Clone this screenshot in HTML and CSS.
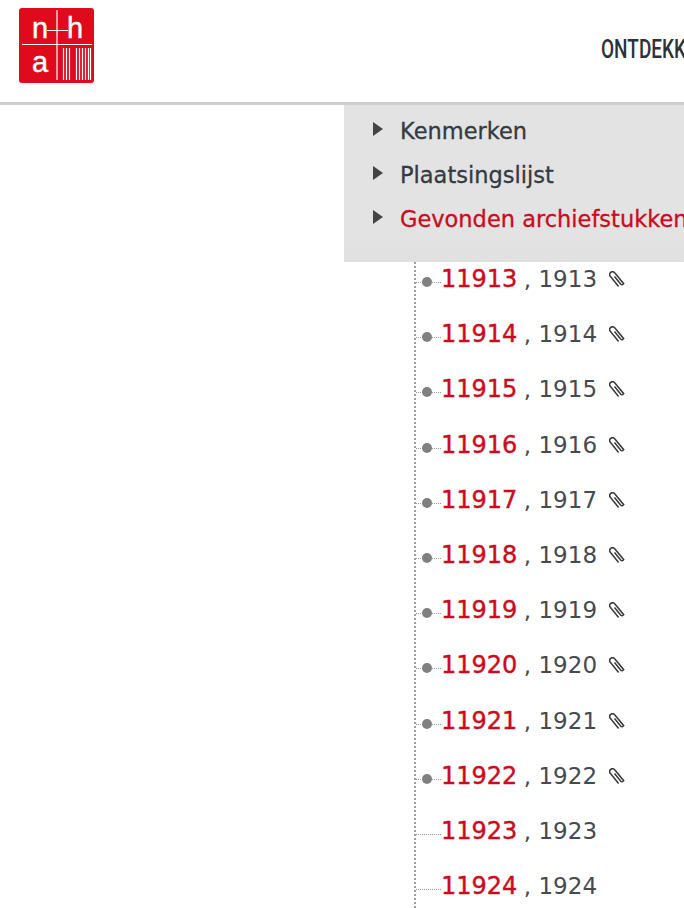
FILE: index.html
```html
<!DOCTYPE html>
<html lang="nl">
<head>
    <meta charset="UTF-8">
    <title>Noord-Hollands Archief</title>
    <link rel="stylesheet" href="styles.css">
</head>
<body>
    <header class="site-header">
        <a class="logo" href="#">
            <svg width="75" height="75" viewBox="0 0 75 75">
                <rect width="75" height="75" rx="3" fill="#df0a1c"/>
                <g stroke="#fff" fill="none">
                    <path d="M3 36.500H73" stroke-width="1.200"/>
                    <path d="M38 2V72" stroke-width="1.200"/>
                    <path d="M28 22.500H49" stroke-width="1"/>
                    <path d="M44.500 40V72M47.500 40V72M50.500 40V72M57.500 40V72M60.500 40V72M63.500 40V72M66.500 40V72M69.500 40V72M71.500 40V72" stroke-width="1.200"/>
                </g>
                <text x="13" y="30" class="logo-letter">n</text>
                <text x="48" y="30" class="logo-letter">h</text>
                <text x="13" y="64" class="logo-letter">a</text>
            </svg>
        </a>
        <nav class="main-nav"><a class="nav-link" href="#">ONTDEKKEN</a></nav>
    </header>

    <main class="content">
        <ul class="accordion">
            <li class="accordion-item">Kenmerken</li>
            <li class="accordion-item">Plaatsingslijst</li>
            <li class="accordion-item active">Gevonden archiefstukken</li>
        </ul>

        <ul class="tree" id="tree"></ul>
    </main>

    <svg class="icon-defs" width="0" height="0">
        <symbol id="clip" viewBox="0 0 16 18">
            <path d="M5.500 5.500 11.800 13.200A1.900 1.900 0 0 0 14.700 12.700L5.700 1.700A2.800 2.800 0 0 0 1.300 5.300L9.600 15.500" fill="none" stroke="#3a3a3a" stroke-width="1.500"/>
        </symbol>
    </svg>

    <script>
    // inventarisnummers 11913 t/m 11924, alleen de eerste tien hebben scans
    const tree = document.getElementById('tree');
    let rows = '';
    for (let i = 0; i < 12; i++) {
        const hasScan = i < 10;
        rows += `
            <li class="tree-row">
                <span class="connector">${hasScan ? '<span class="dot"></span>' : ''}</span>
                <a class="inv-number" href="#">${11913 + i}</a>
                <span class="inv-year">, ${1913 + i}</span>
                ${hasScan ? '<svg class="clip" width="16" height="18"><use href="#clip"></use></svg>' : ''}
            </li>`;
    }
    tree.innerHTML = rows;
    </script>
</body>
</html>
```

FILE: styles.css
```css
* {
    margin: 0;
    padding: 0;
    box-sizing: border-box;
}

html, body {
    height: 100%;
    overflow: hidden;
}

body {
    font-family: "DejaVu Sans", Verdana, sans-serif;
    background-color: #fff;
    color: #333a40;
}

a {
    text-decoration: none;
    color: inherit;
}

ul {
    list-style: none;
}

.site-header {
    height: 105px;
    border-bottom: 3px solid #cfcfcf;
    display: flex;
    padding: 8px 0 0 19px;
    overflow: hidden;
}

.logo {
    display: block;
    width: 75px;
    height: 75px;
}

.logo-letter {
    font-family: "Liberation Sans", Arial, sans-serif;
    font-size: 29px;
    fill: #fff;
    stroke: #fff;
    stroke-width: 0.4px;
}

.main-nav {
    margin-left: 507px;
    padding-top: 28px;
    font-family: Roboto, "Liberation Sans", sans-serif;
    font-size: 25px;
    font-weight: 500;
    line-height: 28px;
    white-space: nowrap;
    color: #2b3238;
}

.nav-link {
    display: inline-block;
    transform: scaleX(0.76);
    transform-origin: left center;
}

.content {
    margin-left: 344px;
    white-space: nowrap;
}

.accordion {
    height: 157px;
    padding-top: 4px;
    background: linear-gradient(to bottom, #e3e3e3 85%, #e0e0e0 100%);
    font-size: 22.500px;
    -webkit-text-stroke: 0.3px;
    overflow: hidden;
}

.accordion-item {
    height: 44px;
    line-height: 44px;
    padding-left: 56px;
    position: relative;
}

.accordion-item::before {
    content: "";
    position: absolute;
    left: 29px;
    top: 13px;
    border-left: 10px solid #444;
    border-top: 7px solid transparent;
    border-bottom: 7px solid transparent;
}

.accordion-item.active {
    color: #cc0a1e;
}

.tree {
    margin-left: 70px;
    border-left: 2px dotted #a0a0a0;
}

.tree-row {
    height: 55.200px;
    padding-top: 1px;
    display: flex;
    align-items: flex-start;
    line-height: 32px;
}

.connector {
    width: 25px;
    height: 1px;
    border-top: 1px dotted #999;
    position: relative;
    margin-top: 19px;
    flex-shrink: 0;
}

.dot {
    position: absolute;
    left: 6px;
    top: -6px;
    width: 10px;
    height: 10px;
    border-radius: 50%;
    background-color: #808080;
}

.inv-number {
    color: #cc0a1e;
    font-size: 24px;
    -webkit-text-stroke: 0.4px;
}

.inv-year {
    margin-left: 6.500px;
    font-size: 23px;
    color: #444a50;
}

.clip {
    margin-left: 12px;
    margin-top: 8px;
}

.icon-defs {
    position: absolute;
}
```
